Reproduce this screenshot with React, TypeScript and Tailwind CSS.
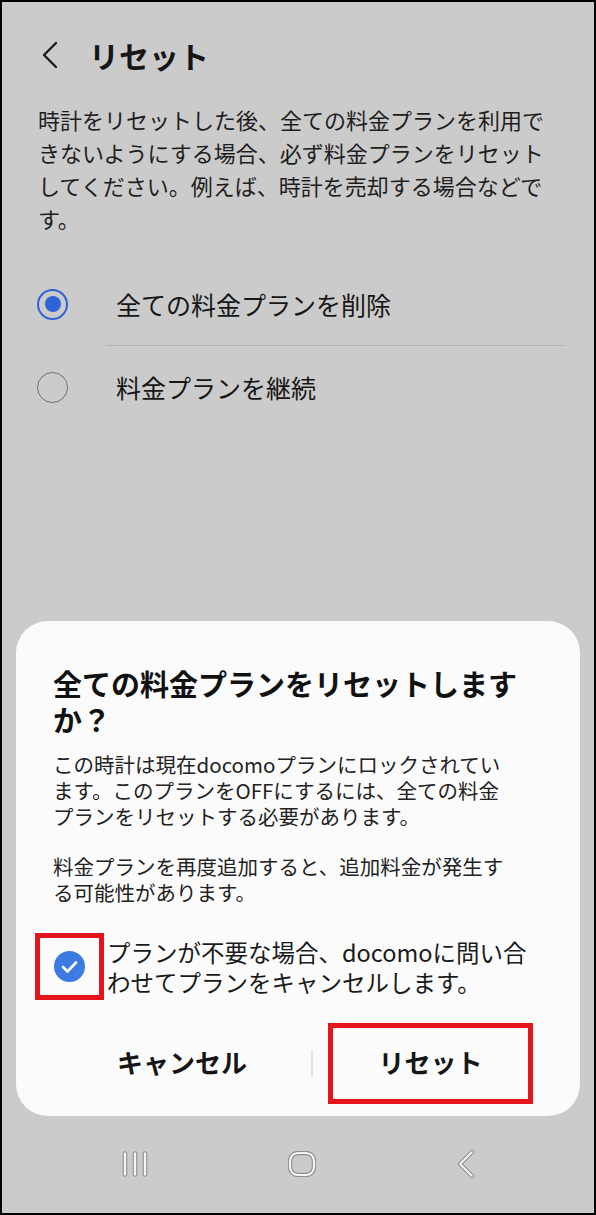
import React from "react";

const JP = { fontFamily: '"Noto Sans CJK JP", "Noto Sans", sans-serif' };

export default function App() {
  return (
    <div
      className="w-[596px] h-[1215px] border-2 border-black bg-[#cbcbcb] flex flex-col text-[#161616] overflow-hidden"
      style={JP}
    >
      {/* Header */}
      <div className="flex items-center h-[36px] mt-[35px] pl-[37px]">
        <svg width="20" height="28" viewBox="0 0 20 28" className="mr-[30px]">
          <path d="M17 2 L5 14 L17 26" fill="none" stroke="#1a1a1a" strokeWidth="2.4" strokeLinecap="round" strokeLinejoin="round" />
        </svg>
        <span className="text-[30px] font-bold leading-[36px]">リセット</span>
      </div>

      {/* Description */}
      <p className="mt-[30px] pl-[36px] text-[22px] leading-[33px] text-[#1e1e1e]">
        時計をリセットした後、全ての料金プランを利用で
        <br />
        きないようにする場合、必ず料金プランをリセット
        <br />
        してください。例えば、時計を売却する場合などで
        <br />
        す。
      </p>

      {/* Options */}
      <div className="mt-[28px] flex flex-col">
        <div className="flex items-center h-[82px] pl-[35px]">
          <div className="w-[31px] h-[31px] rounded-full border-2 border-[#2f63d6] flex items-center justify-center">
            <div className="w-[16px] h-[16px] rounded-full bg-[#2f63d6]" />
          </div>
          <span className="ml-[48px] text-[25px] leading-[34px]">全ての料金プランを削除</span>
        </div>
        <div className="ml-[104px] mr-[29px] h-px bg-[#b4b4b4]" />
        <div className="flex items-center h-[82px] pl-[35px]">
          <div className="w-[31px] h-[31px] rounded-full border-[1.5px] border-[#707070]" />
          <span className="ml-[48px] text-[25px] leading-[34px]">料金プランを継続</span>
        </div>
      </div>

      <div className="flex-1" />

      {/* Dialog */}
      <div className="mx-[14px] w-[564px] rounded-[32px] bg-[#fbfbfb] pt-[44px] pb-[12px] flex flex-col">
        <h2 className="pl-[37px] text-[29px] font-bold leading-[36px] text-[#111]">
          全ての料金プランをリセットします
          <br />
          か？
        </h2>
        <p className="mt-[14px] pl-[37px] text-[20.5px] leading-[26px] text-[#222]">
          この時計は現在docomoプランにロックされてい
          <br />
          ます。このプランをOFFにするには、全ての料金
          <br />
          プランをリセットする必要があります。
        </p>
        <p className="mt-[24px] pl-[37px] text-[20.5px] leading-[26px] text-[#222]">
          料金プランを再度追加すると、追加料金が発生す
          <br />
          る可能性があります。
        </p>

        <div className="mt-[28px] flex items-center pl-[19px]">
          <div className="w-[69px] h-[67px] border-[5px] border-[#e5141d] flex items-center justify-center">
            <svg width="31" height="31" viewBox="0 0 31 31">
              <circle cx="15.5" cy="15.5" r="15.5" fill="#3b7be2" />
              <path d="M9 16 L13.5 20.5 L22 11.5" fill="none" stroke="#fff" strokeWidth="2.6" strokeLinecap="round" strokeLinejoin="round" />
            </svg>
          </div>
          <p className="ml-[3px] text-[23.5px] leading-[30px] text-[#1a1a1a]">
            プランが不要な場合、docomoに問い合
            <br />
            わせてプランをキャンセルします。
          </p>
        </div>

        <div className="mt-[23px] flex items-center pl-[37px]">
          <div className="w-[258px] flex justify-center text-[26px] font-bold leading-[36px] pb-[3px]">キャンセル</div>
          <div className="w-[2px] h-[27px] bg-[#e2e2e2]" />
          <div className="ml-[15px] w-[205px] h-[81px] border-[5px] border-[#e5141d] flex items-center justify-center text-[26px] font-bold leading-[36px] pb-[3px]">
            リセット
          </div>
        </div>
      </div>

      {/* Navigation bar */}
      <div className="h-[97px] flex items-center justify-between pl-[120px] pr-[118px] pb-[2px]">
        <svg width="26" height="26" viewBox="0 0 26 26">
          <g stroke="#8e8e8e" strokeWidth="4.6" strokeLinecap="round">
            <line x1="3" y1="2.5" x2="3" y2="23.5" />
            <line x1="13" y1="2.5" x2="13" y2="23.5" />
            <line x1="23" y1="2.5" x2="23" y2="23.5" />
          </g>
          <g stroke="#f4f4f4" strokeWidth="2.4" strokeLinecap="round">
            <line x1="3" y1="2.5" x2="3" y2="23.5" />
            <line x1="13" y1="2.5" x2="13" y2="23.5" />
            <line x1="23" y1="2.5" x2="23" y2="23.5" />
          </g>
        </svg>
        <svg width="28" height="26" viewBox="0 0 28 26">
          <rect x="2" y="2" width="24" height="22" rx="8" fill="none" stroke="#8e8e8e" strokeWidth="4.4" />
          <rect x="2" y="2" width="24" height="22" rx="8" fill="none" stroke="#f4f4f4" strokeWidth="2.2" />
        </svg>
        <svg width="20" height="28" viewBox="0 0 20 28">
          <path d="M16 2 L4 14 L16 26" fill="none" stroke="#8e8e8e" strokeWidth="4.2" strokeLinecap="round" strokeLinejoin="round" />
          <path d="M16 2 L4 14 L16 26" fill="none" stroke="#f4f4f4" strokeWidth="2" strokeLinecap="round" strokeLinejoin="round" />
        </svg>
      </div>
    </div>
  );
}
